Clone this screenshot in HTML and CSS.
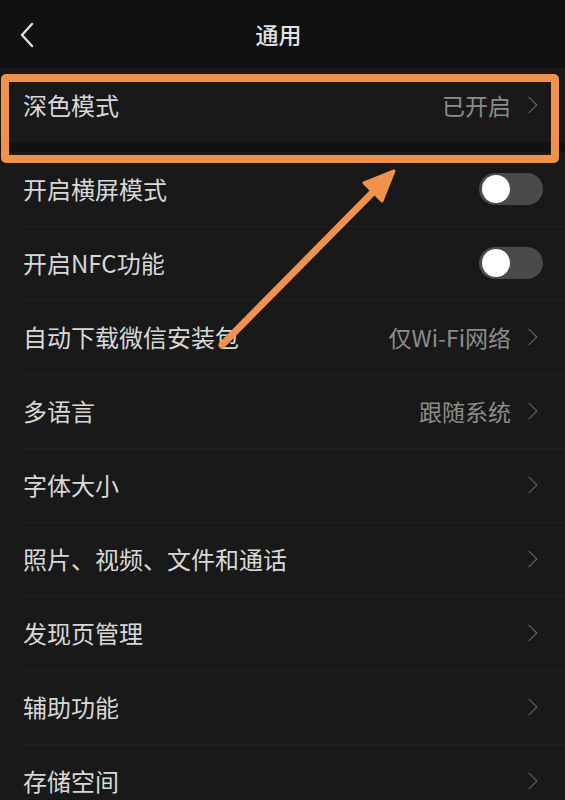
FILE: index.html
```html
<!DOCTYPE html>
<html>
<head>
    <title>通用</title>
    <meta charset="UTF-8">
    <link rel="stylesheet" href="styles.css">
</head>
<body>
<div class="page">
    <header class="topbar">
        <svg class="back" width="16" height="26" viewBox="0 0 16 26">
            <path d="M13 2 L3 13 L13 24" fill="none" stroke="#dedede" stroke-width="2.4" stroke-linecap="round" stroke-linejoin="round"/>
        </svg>
        <h1>通用</h1>
    </header>

    <div class="group">
        <div class="row">
            <span class="label">深色模式</span>
            <span class="value">已开启</span>
            <span class="chevron"></span>
        </div>
    </div>

    <div class="group gap">
        <div class="row">
            <span class="label">开启横屏模式</span>
            <span class="switch"><span class="knob"></span></span>
        </div>
        <div class="row">
            <span class="label">开启NFC功能</span>
            <span class="switch"><span class="knob"></span></span>
        </div>
        <div class="row">
            <span class="label">自动下载微信安装包</span>
            <span class="value">仅Wi-Fi网络</span>
            <span class="chevron"></span>
        </div>
        <div class="row">
            <span class="label">多语言</span>
            <span class="value">跟随系统</span>
            <span class="chevron"></span>
        </div>
        <div class="row">
            <span class="label">字体大小</span>
            <span class="chevron"></span>
        </div>
        <div class="row">
            <span class="label">照片、视频、文件和通话</span>
            <span class="chevron"></span>
        </div>
        <div class="row">
            <span class="label">发现页管理</span>
            <span class="chevron"></span>
        </div>
        <div class="row">
            <span class="label">辅助功能</span>
            <span class="chevron"></span>
        </div>
        <div class="row">
            <span class="label">存储空间</span>
            <span class="chevron"></span>
        </div>
    </div>

    <!-- annotation drawn over the screenshot -->
    <div class="highlight"></div>
    <svg class="pointer" width="565" height="800" viewBox="0 0 565 800">
        <line x1="222" y1="345" x2="378" y2="187" stroke="#f0924c" stroke-width="7" stroke-linecap="round"/>
        <polygon points="394,171 364,183 382,201" fill="#f0924c" stroke="#f0924c" stroke-width="3" stroke-linejoin="round"/>
    </svg>
</div>
</body>
</html>
```

FILE: styles.css
```css
html, body {
    margin: 0;
    padding: 0;
    background: #111111;
}

body {
    font-family: "Noto Sans CJK SC", "Noto Sans", sans-serif;
    color: #dcdcdc;
}

.page {
    position: relative;
    width: 565px;
    height: 800px;
    overflow: hidden;
    background: #111111;
}

.topbar {
    height: 68px;
    display: flex;
    align-items: center;
    justify-content: center;
    position: relative;
    background: #111111;
}

.topbar h1 {
    margin: 0;
    font-size: 23px;
    font-weight: 500;
    color: #e2e2e2;
    margin-left: -8px;
}

.back {
    position: absolute;
    left: 19px;
    top: 22px;
}

.group {
    background: #191919;
}

.gap {
    margin-top: 10px;
}

.row {
    height: 74px;
    display: flex;
    align-items: center;
    padding: 0 26px 0 23px;
    position: relative;
}

.gap .row + .row::before {
    content: "";
    position: absolute;
    left: 24px;
    right: 0;
    top: 0;
    height: 1px;
    background: #202020;
}

.label {
    flex: 1;
    font-size: 24px;
    color: #d8d8d8;
    line-height: 1;
}

.value {
    font-size: 23px;
    color: #8c8c8c;
    margin-right: 12px;
    line-height: 1;
}

.chevron {
    width: 11px;
    height: 11px;
    border-top: 1.8px solid #666666;
    border-right: 1.8px solid #666666;
    transform: rotate(45deg);
    margin-right: 4px;
}

.switch {
    width: 64px;
    height: 32px;
    border-radius: 16px;
    background: #4a4a4a;
    display: flex;
    align-items: center;
    padding-left: 3px;
    box-sizing: border-box;
    margin-right: -4px;
}

.knob {
    width: 28px;
    height: 28px;
    border-radius: 50%;
    background: #ffffff;
}

.highlight {
    position: absolute;
    left: 1px;
    top: 74px;
    width: 558px;
    height: 89px;
    box-sizing: border-box;
    border: 8px solid #f0924c;
    border-radius: 5px;
    box-shadow: inset 0 0 0 1px #2a1a0e;
}

.pointer {
    position: absolute;
    left: 0;
    top: 0;
}
```
